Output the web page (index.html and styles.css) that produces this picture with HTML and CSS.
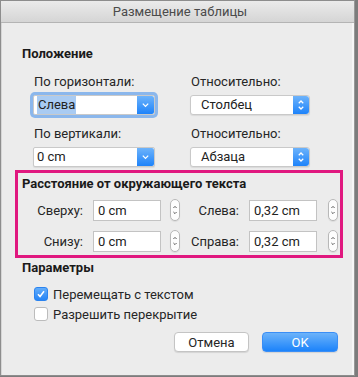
FILE: index.html
```html
<!DOCTYPE html>
<html>
<head>
    <title>Размещение таблицы</title>
    <link rel="stylesheet" href="styles.css">
</head>
<body>
    <div class="window">
        <div class="titlebar">Размещение таблицы</div>

        <div class="content">
            <h2 class="section-title">Положение</h2>

            <div class="position-grid">
                <label class="field-label">По горизонтали:</label>
                <label class="field-label">Относительно:</label>

                <div class="combo focused">
                    <span class="combo-value"><span class="selected-text">Слева</span></span>
                    <span class="combo-arrow">
                        <svg viewBox="0 0 17 20"><path d="M5.5 8.5l3 3 3-3" /></svg>
                    </span>
                </div>
                <div class="popup">
                    <span class="popup-value">Столбец</span>
                    <span class="popup-arrow">
                        <svg viewBox="0 0 16 20"><path d="M5.5 8l2.5-2.5 2.5 2.5M5.5 12l2.5 2.5 2.5-2.5" /></svg>
                    </span>
                </div>

                <label class="field-label">По вертикали:</label>
                <label class="field-label">Относительно:</label>

                <div class="combo">
                    <span class="combo-value">0 cm</span>
                    <span class="combo-arrow">
                        <svg viewBox="0 0 17 20"><path d="M5.5 8.5l3 3 3-3" /></svg>
                    </span>
                </div>
                <div class="popup">
                    <span class="popup-value">Абзаца</span>
                    <span class="popup-arrow">
                        <svg viewBox="0 0 16 20"><path d="M5.5 8l2.5-2.5 2.5 2.5M5.5 12l2.5 2.5 2.5-2.5" /></svg>
                    </span>
                </div>
            </div>

            <!-- highlighted group -->
            <div class="distance-box">
                <h2 class="section-title inner">Расстояние от окружающего текста</h2>
                <div class="distance-grid">
                    <label class="dist-label">Сверху:</label>
                    <div class="text-input">0 cm</div>
                    <div class="stepper">
                        <svg viewBox="0 0 10 22"><path d="M3 8.5l2-2 2 2M3 13.5l2 2 2-2" /></svg>
                    </div>
                    <label class="dist-label">Слева:</label>
                    <div class="text-input">0,32 cm</div>
                    <div class="stepper">
                        <svg viewBox="0 0 10 22"><path d="M3 8.5l2-2 2 2M3 13.5l2 2 2-2" /></svg>
                    </div>

                    <label class="dist-label">Снизу:</label>
                    <div class="text-input">0 cm</div>
                    <div class="stepper">
                        <svg viewBox="0 0 10 22"><path d="M3 8.5l2-2 2 2M3 13.5l2 2 2-2" /></svg>
                    </div>
                    <label class="dist-label">Справа:</label>
                    <div class="text-input">0,32 cm</div>
                    <div class="stepper">
                        <svg viewBox="0 0 10 22"><path d="M3 8.5l2-2 2 2M3 13.5l2 2 2-2" /></svg>
                    </div>
                </div>
            </div>

            <h2 class="section-title params">Параметры</h2>

            <div class="checks">
                <div class="check-row">
                    <span class="checkbox checked">
                        <svg viewBox="0 0 14 14"><path d="M3.5 7.2l2.4 2.8 4.6-6.2" /></svg>
                    </span>
                    <span>Перемещать с текстом</span>
                </div>
                <div class="check-row">
                    <span class="checkbox"></span>
                    <span>Разрешить перекрытие</span>
                </div>
            </div>

            <div class="buttons">
                <button class="btn">Отмена</button>
                <button class="btn primary">OK</button>
            </div>
        </div>
    </div>
</body>
</html>
```

FILE: styles.css
```css
* {
    margin: 0;
    padding: 0;
    box-sizing: border-box;
}

body {
    background: #7c7c7c;
    font-family: Roboto, "Liberation Sans", sans-serif;
    font-size: 13px;
    color: #222;
    width: 358px;
    height: 377px;
    overflow: hidden;
}

.window {
    width: 355px;
    height: 376px;
    background: #ececec;
    border: 1px solid #8d8d8d;
    border-right-color: #999;
    box-shadow: inset 1px 0 0 #d6d6d6, inset -2px 0 0 #f6f6f6;
}

.titlebar {
    height: 22px;
    line-height: 21px;
    text-align: center;
    color: #4b4b4b;
    font-size: 13px;
    background: linear-gradient(#ebebeb, #d5d5d5);
    border-bottom: 1px solid #b4b4b4;
    padding-left: 5px;
}

.content {
    padding-left: 14px;
}

.section-title {
    font-size: 13px;
    font-weight: 700;
    line-height: 16px;
    color: #1a1a1a;
    padding-left: 7px;
    margin-top: 23px;
}

/* Position block */
.position-grid {
    display: grid;
    grid-template-columns: 122px 120px;
    column-gap: 35px;
    margin-left: 18px;
    margin-top: 12px;
}

.field-label {
    line-height: 16px;
    padding-left: 1px;
    color: #262626;
    margin-bottom: 5px;
}

.combo,
.popup {
    height: 20px;
    display: flex;
    background: #fff;
    border: 1px solid #c9c9c9;
    border-radius: 3px;
    margin-bottom: 11px;
    box-shadow: 0 1px 1px rgba(0, 0, 0, 0.08);
}

.combo {
    border-radius: 2px;
}

.combo.focused {
    box-shadow: 0 0 0 3px #8bb7ec;
}

.combo-value,
.popup-value {
    flex: 1;
    line-height: 18px;
    padding-left: 3px;
    white-space: nowrap;
}

.popup-value {
    padding-left: 10px;
}

.selected-text {
    background: #a9cbf2;
    padding: 1px 1px 2px 1px;
}

.combo-arrow,
.popup-arrow {
    width: 17px;
    background: linear-gradient(#6db3fb, #1e83fa);
    border-radius: 0 2px 2px 0;
    display: flex;
}

.popup-arrow {
    width: 16px;
    border-radius: 0 3px 3px 0;
}

.combo-arrow svg,
.popup-arrow svg {
    width: 100%;
    height: 100%;
    fill: none;
    stroke: #fff;
    stroke-width: 1.4;
}

/* Highlighted distance group */
.distance-box {
    margin-top: -8px;
    width: 328px;
    height: 88px;
    border: 3px solid #e0187f;
    padding-top: 3px;
}

.section-title.inner {
    margin-top: 0;
    padding-left: 4px;
}

.distance-grid {
    display: grid;
    grid-template-columns: 75px 77px 13px 66px 79px 10px;
    grid-auto-rows: 22px;
    row-gap: 9px;
    margin-top: 7px;
    align-items: center;
}

.dist-label {
    text-align: right;
    padding-right: 10px;
    color: #262626;
}

.text-input {
    width: 68px;
    height: 21px;
    background: #fff;
    border: 1px solid #c3c3c3;
    line-height: 20px;
    padding-left: 4px;
    white-space: nowrap;
}

.stepper {
    width: 10px;
    height: 22px;
    border: 1px solid #b8b8b8;
    border-radius: 5px;
    background: #fdfdfd;
    box-shadow: 0 1px 1px rgba(0, 0, 0, 0.08);
}

.stepper svg {
    display: block;
    width: 8px;
    height: 20px;
    fill: none;
    stroke: #444;
    stroke-width: 1.1;
}

/* Options */
.section-title.params {
    margin-top: 2px;
}

.checks {
    margin-top: 11px;
    margin-left: 19px;
}

.check-row {
    display: flex;
    align-items: center;
    gap: 5px;
    height: 14px;
    margin-bottom: 6px;
    color: #262626;
}

.checkbox {
    width: 14px;
    height: 14px;
    border: 1px solid #bcbcbc;
    border-radius: 3px;
    background: #fff;
    display: flex;
}

.checkbox.checked {
    border-color: #2a83f0;
    background: linear-gradient(#63adfa, #2584f6);
}

.checkbox svg {
    width: 100%;
    height: 100%;
    fill: none;
    stroke: #fff;
    stroke-width: 1.8;
}

.buttons {
    display: flex;
    gap: 13px;
    margin-top: 11px;
    margin-left: 159px;
}

.btn {
    font-family: inherit;
    font-size: 13px;
    width: 75px;
    height: 20px;
    border: 1px solid #c4c4c4;
    border-radius: 4px;
    background: #fff;
    color: #262626;
    box-shadow: 0 1px 1px rgba(0, 0, 0, 0.1);
}

.btn.primary {
    width: 76px;
    border-color: #3a8ef6;
    background: linear-gradient(#6cb3fa, #1c83fa);
    color: #fff;
}
```
